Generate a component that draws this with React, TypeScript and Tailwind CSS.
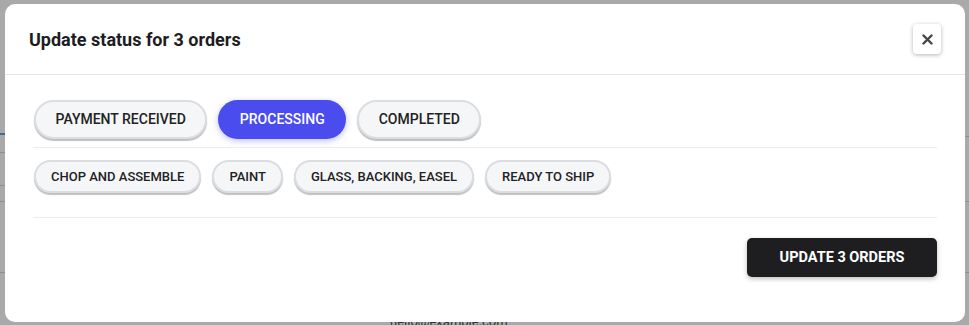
import React from 'react';

const mainStatuses = ['Payment Received', 'Processing', 'Completed'];
const subStatuses = ['Chop and Assemble', 'Paint', 'Glass, Backing, Easel', 'Ready to Ship'];

const Chip: React.FC<{ label: string; active?: boolean; small?: boolean }> = ({ label, active, small }) => {
  const size = small ? 'h-[33px] px-[15px] text-[13px]' : 'h-[39px] px-[19.5px] text-[14px]';
  if (active) {
    return (
      <button className={`${size} rounded-full border-2 border-transparent bg-[#4a4cee] font-medium uppercase text-white shadow-[0_2px_6px_rgba(74,76,238,0.35)]`}>
        {label}
      </button>
    );
  }
  return (
    <button
      className={`${size} rounded-full border-2 border-[#dcdde0] bg-[#f5f6f8] font-medium uppercase text-[#222] shadow-[0_2px_1px_rgba(0,0,0,0.25)]`}
    >
      {label}
    </button>
  );
};

export default function App() {
  return (
    <div className="relative h-[325px] w-[969px] overflow-hidden bg-[#a9a9a9] font-['Roboto',sans-serif]">
      {/* page behind the overlay */}
      <div className="absolute left-0 top-[133px] h-[2px] w-[5px] bg-[#3e6b90]" />
      <div className="absolute left-0 top-[152px] h-px w-[5px] bg-[#8e8e8e]" />
      <div className="absolute left-0 top-[185px] h-px w-[5px] bg-[#8e8e8e]" />
      <div className="absolute left-0 top-[201px] h-px w-[5px] bg-[#8e8e8e]" />
      <div className="absolute left-0 top-[272px] h-px w-[5px] bg-[#8e8e8e]" />
      <div className="absolute right-0 top-[136px] h-px w-[4px] bg-[#8e8e8e]" />
      <div className="absolute right-0 top-[201px] h-px w-[4px] bg-[#8e8e8e]" />
      <div className="absolute right-0 top-[272px] h-px w-[4px] bg-[#8e8e8e]" />
      <div className="absolute left-[390px] top-[314px] text-[13px] leading-[16px] text-[#333]">hello@example.com</div>

      <div className="absolute left-[5px] top-[4px] flex h-[318px] w-[960px] flex-col rounded-[10px] bg-white">
        <div className="flex h-[71px] items-center justify-between border-b border-[#e6e6e6] px-[24px]">
          <h2 className="text-[18px] font-bold text-[#1d1d1f]">Update status for 3 orders</h2>
          <button className="flex h-[30px] w-[28px] items-center justify-center rounded-[4px] bg-white shadow-[0_1px_4px_rgba(0,0,0,0.3)]">
            <svg width="11" height="11" viewBox="0 0 11 11" fill="none">
              <path d="M1.5 1.5l8 8M9.5 1.5l-8 8" stroke="#454545" strokeWidth="2.4" strokeLinecap="round" />
            </svg>
          </button>
        </div>

        <div className="flex flex-col px-[28px] pt-[25px]">
          <div className="flex gap-[11px] pl-px">
            {mainStatuses.map((s) => (
              <Chip key={s} label={s} active={s === 'Processing'} />
            ))}
          </div>
          <div className="mt-[8px] h-px bg-[#ececec]" />
          <div className="mt-[12px] flex gap-[11px] pl-px">
            {subStatuses.map((s) => (
              <Chip key={s} label={s} small />
            ))}
          </div>
          <div className="mt-[24px] h-px bg-[#ececec]" />
          <div className="mt-[20px] flex justify-end">
            <button className="h-[39px] w-[190px] rounded-[5px] bg-[#1e1e20] text-[14.5px] font-bold uppercase text-white shadow-[0_2px_5px_rgba(0,0,0,0.25)]">
              Update 3 orders
            </button>
          </div>
        </div>
      </div>
    </div>
  );
}
